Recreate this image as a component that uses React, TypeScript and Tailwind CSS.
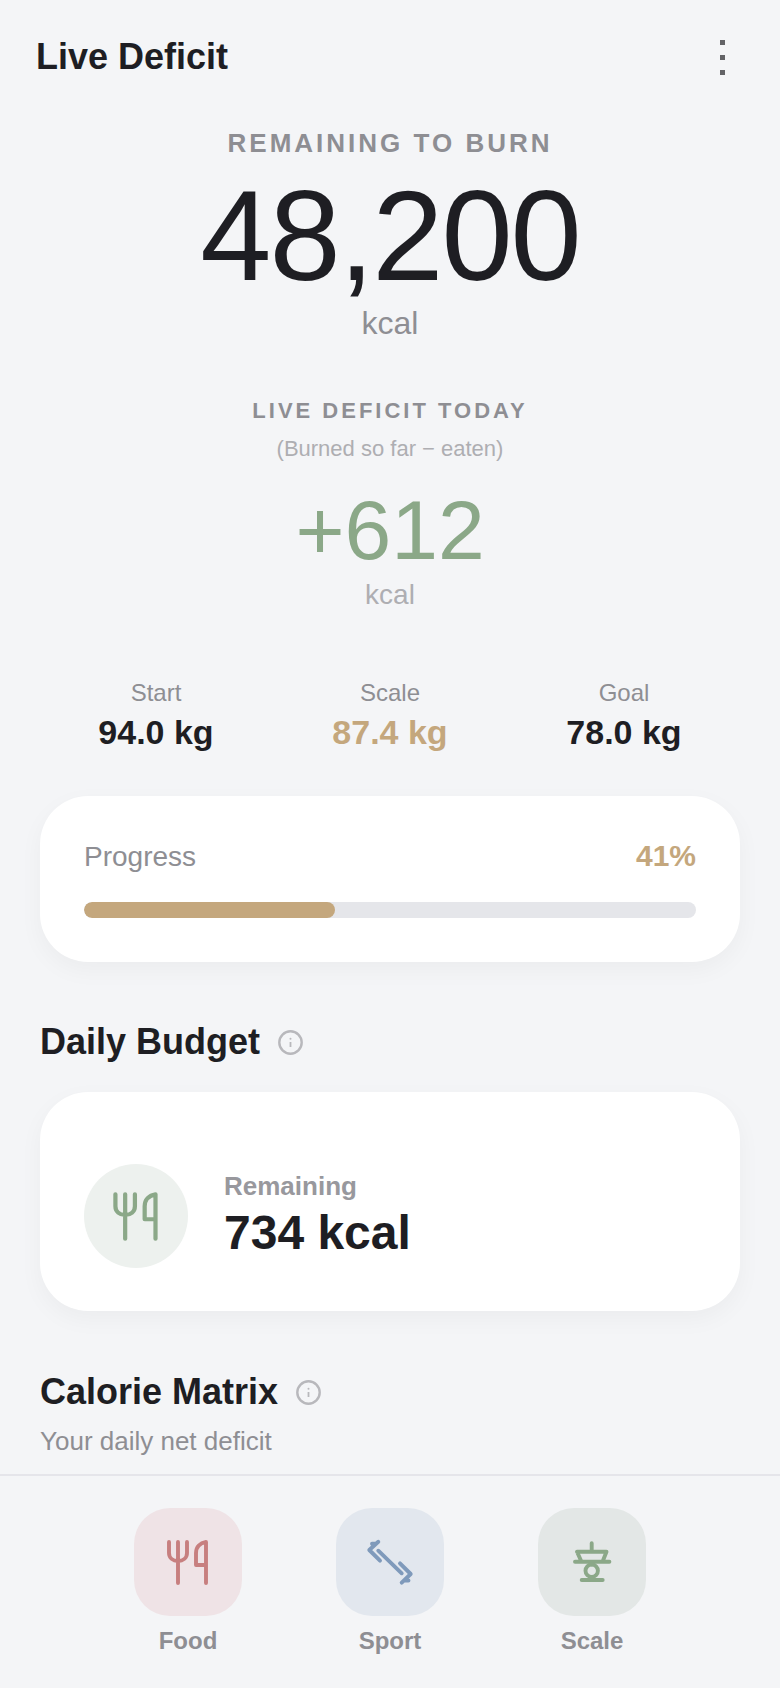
function ForkKnife({ className }: { className: string }) {
  return (
    <svg viewBox="0 0 48 48" fill="none" stroke="currentColor" strokeWidth="3.9" strokeLinecap="round" strokeLinejoin="round" className={className}>
      <path d="M5 4v11c0 5 4 8 9 8s9-3 9-8V4M14 4v41" />
      <path d="M42 45V4c-6 1-10 5-10 11v12h10" />
    </svg>
  );
}

function Dumbbell({ className }: { className: string }) {
  return (
    <svg viewBox="0 0 48 48" fill="none" stroke="currentColor" strokeWidth="3.9" strokeLinecap="round" strokeLinejoin="round" className={className}>
      <path d="M12.3 12.7 35.7 35.3" />
      <path d="M14 22.7 3.3 12l9-8.3M6 5.8h3" />
      <path d="M34 25.3 44.7 36l-9 8.7M39.5 42.5h3" />
    </svg>
  );
}

function ScaleIcon({ className }: { className: string }) {
  return (
    <svg viewBox="0 0 48 48" fill="none" stroke="currentColor" strokeWidth="3.9" strokeLinecap="round" strokeLinejoin="round" className={className}>
      <path d="M23.7 5.3v7M9 13.7h29.5l-4 10M9 13.7l4.5 10M7 23.7h34.4M23.7 24v2.5" />
      <circle cx="23.7" cy="32.7" r="6.2" />
      <path d="M13.7 42h21" />
    </svg>
  );
}

function InfoIcon() {
  return (
    <svg viewBox="0 0 25 25" fill="none" className="w-[25px] h-[25px] shrink-0">
      <circle cx="12.5" cy="12.5" r="11.2" stroke="#b8b8bc" strokeWidth="2.4" />
      <circle cx="12.5" cy="8.7" r="1" fill="#b8b8bc" />
      <path d="M12.5 12v5" stroke="#b8b8bc" strokeWidth="1.8" />
    </svg>
  );
}

function Stat({ label, value, valueClass }: { label: string; value: string; valueClass: string }) {
  return (
    <div className="flex flex-col items-center">
      <span className="text-[24px] leading-[34px] text-[#8e8e93]">{label}</span>
      <span className={`text-[34px] leading-[44px] font-bold ${valueClass}`}>{value}</span>
    </div>
  );
}

function NavItem({ label, boxClass, children }: { label: string; boxClass: string; children: React.ReactNode }) {
  return (
    <div className="flex flex-col items-center w-[108px]">
      <div className={`w-[108px] h-[108px] rounded-[36px] flex items-center justify-center ${boxClass}`}>{children}</div>
      <span className="mt-[9px] text-[24px] leading-[32px] font-semibold text-[#8e8e93]">{label}</span>
    </div>
  );
}

export default function App() {
  return (
    <div className="w-[780px] h-[1688px] bg-[#f4f5f7] flex flex-col overflow-hidden font-['Liberation_Sans',Arial,sans-serif] text-[#1e1e23]">
      <main className="flex-1 min-h-0 overflow-hidden">
        <header className="h-[112px] pt-[2px] pl-9 pr-[36px] flex items-center justify-between">
          <h1 className="text-[36px] leading-[48px] font-bold">Live Deficit</h1>
          <button className="flex flex-col gap-[10px] px-[19px] py-2">
            <span className="w-[5px] h-[5px] bg-[#636366]" />
            <span className="w-[5px] h-[5px] bg-[#636366]" />
            <span className="w-[5px] h-[5px] bg-[#636366]" />
          </button>
        </header>

        <section className="flex flex-col items-center">
          <p className="mt-[13px] text-[26px] leading-[36px] font-semibold tracking-[3px] text-[#8e8e93]">REMAINING TO BURN</p>
          <p className="mt-[7px] text-[128px] leading-[136px] tracking-[-2px]">48,200</p>
          <p className="mt-[1px] text-[32px] leading-[36px] text-[#8e8e93]">kcal</p>
          <p className="mt-[55px] text-[22px] leading-[30px] font-semibold tracking-[3px] text-[#8e8e93]">LIVE DEFICIT TODAY</p>
          <p className="mt-[7px] text-[22px] leading-[32px] text-[#aeaeb2]">(Burned so far − eaten)</p>
          <p className="mt-[17px] text-[84px] leading-[96px] text-[#8ba888]">+612</p>
          <p className="mt-[1px] text-[28px] leading-[32px] text-[#aeaeb2]">kcal</p>
        </section>

        <section className="mt-[65px] px-[39px] grid grid-cols-3">
          <Stat label="Start" value="94.0 kg" valueClass="text-[#1e1e23]" />
          <Stat label="Scale" value="87.4 kg" valueClass="text-[#c4a77d]" />
          <Stat label="Goal" value="78.0 kg" valueClass="text-[#1e1e23]" />
        </section>

        <section className="mt-[42px] mx-10 h-[166px] rounded-[48px] bg-white shadow-[0_8px_24px_rgba(0,0,0,0.04)] px-11 pt-[37px]">
          <div className="flex items-baseline justify-between h-[48px]">
            <span className="text-[28px] text-[#8e8e93]">Progress</span>
            <span className="text-[30px] font-bold text-[#c4a77d]">41%</span>
          </div>
          <div className="mt-[21px] h-4 rounded-full bg-[#e5e6ea] overflow-hidden">
            <div className="h-full rounded-full bg-[#c4a77d]" style={{ width: "41%" }} />
          </div>
        </section>

        <section className="mt-[56px] mx-10 flex items-center gap-[18px] h-[48px]">
          <h2 className="text-[36px] leading-[48px] font-bold">Daily Budget</h2>
          <InfoIcon />
        </section>

        <section className="mt-[26px] mx-10 h-[219px] rounded-[48px] bg-white shadow-[0_8px_24px_rgba(0,0,0,0.04)] px-11 pt-[72px] flex items-start gap-9">
          <div className="w-[104px] h-[104px] rounded-full bg-[#edf1ee] flex items-center justify-center text-[#8ba888]">
            <ForkKnife className="w-[52px] h-[52px]" />
          </div>
          <div className="mt-[4px] flex flex-col">
            <span className="text-[26px] leading-[36px] font-semibold text-[#98989d]">Remaining</span>
            <span className="text-[48px] leading-[58px] font-bold">734 kcal</span>
          </div>
        </section>

        <section className="mt-[57px] mx-10 flex items-center gap-[18px] h-[48px]">
          <h2 className="text-[36px] leading-[48px] font-bold">Calorie Matrix</h2>
          <InfoIcon />
        </section>
        <p className="mt-[7px] mx-10 text-[26px] leading-[36px] text-[#8e8e93]">Your daily net deficit</p>
      </main>

      <nav className="h-[214px] shrink-0 border-t-2 border-[#e5e5ea] bg-[#f4f5f7] pt-[32px] flex justify-center gap-[94px]">
        <NavItem label="Food" boxClass="bg-[#efe3e6] text-[#c77f7f]">
          <ForkKnife className="w-12 h-12" />
        </NavItem>
        <NavItem label="Sport" boxClass="bg-[#e2e7ee] text-[#7f9abb]">
          <Dumbbell className="w-12 h-12" />
        </NavItem>
        <NavItem label="Scale" boxClass="bg-[#e3e7e6] text-[#8ba888]">
          <ScaleIcon className="w-12 h-12" />
        </NavItem>
      </nav>
    </div>
  );
}
